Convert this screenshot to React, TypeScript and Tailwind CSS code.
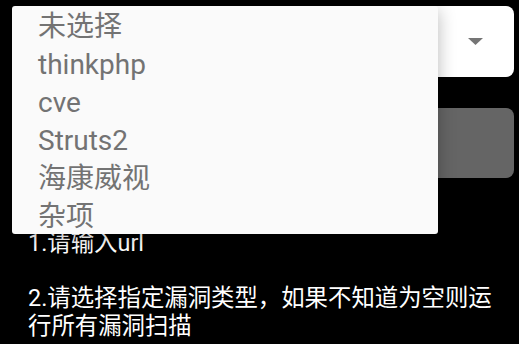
const options = ["未选择", "thinkphp", "cve", "Struts2", "海康威视", "杂项"];

const font = { fontFamily: '"Roboto", "Noto Sans CJK SC", sans-serif' };

export default function App() {
  return (
    <div className="relative h-[344px] w-[519px] overflow-hidden bg-black" style={font}>
      <div className="flex flex-col pl-[12px] pr-[5px] pt-[6px]">
        {/* spinner */}
        <div className="flex h-[71px] items-center justify-end rounded-[8px] bg-white pr-[31px]">
          <svg width="15" height="7" viewBox="0 0 15 7">
            <path d="M0 0 L15 0 L7.5 7 Z" fill="#757575" />
          </svg>
        </div>

        {/* scan button */}
        <div className="mt-[31px] h-[70px] rounded-[8px] bg-[#656565]" />

        <p className="mt-[52px] whitespace-pre-line pl-[16px] pr-[4px] text-[23.4px] leading-[27.7px] text-white">
          {"1.请输入url\n\n2.请选择指定漏洞类型，如果不知道为空则运行所有漏洞扫描"}
        </p>
      </div>

      {/* open dropdown */}
      <ul className="absolute left-[12px] top-[6px] w-[426px] rounded-[3px] bg-[#fafafa] shadow-[0_4px_18px_rgba(0,0,0,0.28)]">
        {options.map((o) => (
          <li key={o} className="flex h-[38px] items-center pl-[26px] pt-[4px] text-[28px] leading-none text-[#737373]">
            {o}
          </li>
        ))}
      </ul>
    </div>
  );
}
